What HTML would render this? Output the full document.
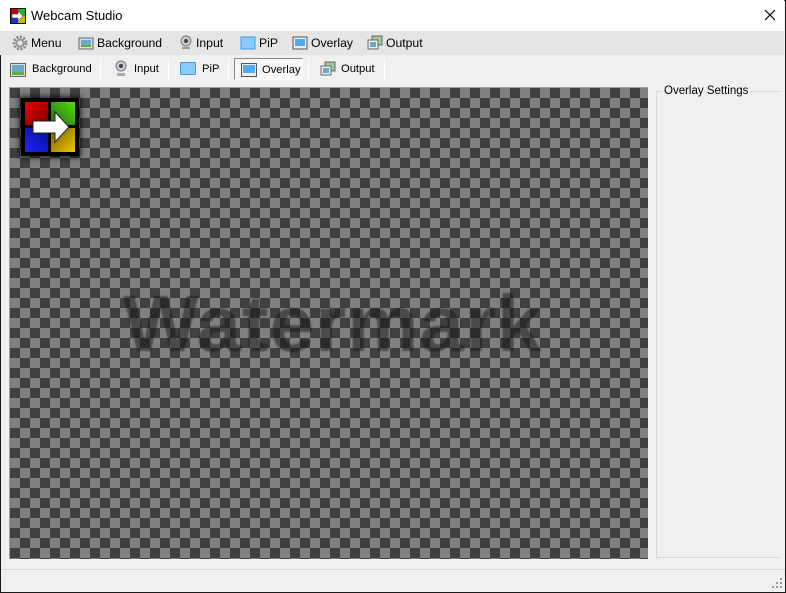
<!DOCTYPE html>
<html><head><style>
*{margin:0;padding:0;box-sizing:border-box}
body{width:786px;height:593px;overflow:hidden;background:#f0f0f0;font-family:"Liberation Sans",Arial,sans-serif;font-size:12px;color:#000;position:relative}
.win{position:absolute;left:0;top:0;width:786px;height:593px;border:1px solid #1a1a1a;border-top:1px solid #2a2a2a}
.title{position:absolute;left:0;top:0;width:784px;height:31px;background:#fff}
.title span{position:absolute;left:31px;top:8px;font-size:13px}
.menu{position:absolute;left:0;top:31px;width:784px;height:24px;background:#e5e5e5}
.mi{position:absolute;top:5px;font-size:12.2px}
.tb{position:absolute;top:63px;font-size:11.2px}
.sep{position:absolute;top:58px;width:1px;height:22px;background:#c8c8c8;border-right:1px solid #fff}
.ico{position:absolute}
.canvas{position:absolute;left:9px;top:87px;width:639px;height:472px;border-left:1px solid #a0a0a0;border-top:1px solid #a0a0a0;
background-color:#404040;background-image:linear-gradient(45deg,#808080 25%,transparent 25%,transparent 75%,#808080 75%),linear-gradient(45deg,#808080 25%,transparent 25%,transparent 75%,#808080 75%);background-size:20px 20px;background-position:0 0,10px 10px;overflow:hidden}
.wm{position:absolute;left:113px;top:190px;font-size:80px;font-weight:bold;color:rgba(20,20,20,0.5);letter-spacing:1px;filter:blur(0.8px)}
.gb{position:absolute;left:656px;top:91px;width:125px;height:467px;border:1px solid #d8d8d8;border-right:none}
.gb span{position:absolute;left:5px;top:-7px;background:#f0f0f0;padding:0 2px;font-size:11.5px}
</style></head><body>
<div class="win"></div>
<div class="title">
<svg class="ico" style="left:10px;top:8px" width="16" height="16" viewBox="0 0 16 16"><rect width="16" height="16" fill="#111"/><rect x="1" y="1" width="7" height="7" fill="#c00"/><rect x="8" y="1" width="7" height="7" fill="#3a3"/><rect x="1" y="8" width="7" height="7" fill="#13c"/><rect x="8" y="8" width="7" height="7" fill="#cb0"/><path d="M2 6h6V3l5 5-5 5v-3H2z" fill="#fff" stroke="#333" stroke-width=".5"/></svg>
<span>Webcam Studio</span>
<svg class="ico" style="left:764px;top:9px" width="12" height="12"><path d="M1 1L11 11M11 1L1 11" stroke="#000" stroke-width="1.2"/></svg>
</div>
<div class="menu">
<svg class="ico" style="left:12px;top:4px" width="16" height="16"><circle cx="8" cy="8" r="6" fill="none" stroke="#888" stroke-width="3" stroke-dasharray="2 1.5"/><circle cx="8" cy="8" r="3.5" fill="none" stroke="#999" stroke-width="2"/></svg>
<span class="mi" style="left:31px">Menu</span>
<svg class="ico" style="left:78px;top:4px" width="16" height="16"><rect x="1" y="3" width="14" height="11" fill="#ddd" stroke="#666"/><rect x="3" y="5" width="10" height="7" fill="#6ac"/><rect x="3" y="10" width="10" height="2" fill="#6a3"/></svg>
<span class="mi" style="left:97px">Background</span>
<svg class="ico" style="left:178px;top:4px" width="16" height="16"><circle cx="8" cy="6" r="5" fill="#ccc" stroke="#777"/><circle cx="8" cy="6" r="2" fill="#345"/><rect x="4" y="12" width="8" height="2" fill="#999"/></svg>
<span class="mi" style="left:196px">Input</span>
<svg class="ico" style="left:240px;top:4px" width="16" height="16"><rect x="1" y="2" width="14" height="12" fill="#8cf" stroke="#49d"/></svg>
<span class="mi" style="left:259px">PiP</span>
<svg class="ico" style="left:292px;top:5px" width="16" height="14"><rect x="1" y="1" width="14" height="12" fill="#eee" stroke="#555"/><rect x="3" y="3" width="10" height="7" fill="#5ae"/></svg>
<span class="mi" style="left:311px">Overlay</span>
<svg class="ico" style="left:367px;top:4px" width="16" height="16"><rect x="5" y="1" width="10" height="9" fill="#9c9" stroke="#666"/><rect x="1" y="5" width="10" height="9" fill="#eee" stroke="#666"/><rect x="3" y="7" width="6" height="5" fill="#6ac"/></svg>
<span class="mi" style="left:386px">Output</span>
</div>
<svg class="ico" style="left:10px;top:63px" width="16" height="14"><rect x="0.5" y="0.5" width="15" height="13" fill="#ddd" stroke="#666"/><rect x="2" y="2" width="12" height="10" fill="#6ac"/><rect x="2" y="9" width="12" height="3" fill="#6a3"/></svg>
<span class="tb" style="left:32px">Background</span>
<div class="sep" style="left:100px"></div>
<svg class="ico" style="left:113px;top:60px" width="16" height="18"><circle cx="8" cy="6" r="5" fill="#ccc" stroke="#777"/><circle cx="8" cy="6" r="2" fill="#345"/><rect x="4" y="13" width="8" height="3" fill="#aaa"/></svg>
<span class="tb" style="left:134px">Input</span>
<div class="sep" style="left:168px"></div>
<svg class="ico" style="left:180px;top:62px" width="16" height="14"><rect x="0.5" y="0.5" width="15" height="12" rx="1" fill="#8cf" stroke="#49d"/></svg>
<span class="tb" style="left:202px">PiP</span>
<div class="sep" style="left:228px"></div>
<div style="position:absolute;left:234px;top:58px;width:69px;height:22px;border:1px solid #8a8a8a;border-right-color:#fff;border-bottom-color:#fff;background:#f7f7f7"></div>
<svg class="ico" style="left:241px;top:63px" width="16" height="14"><rect x="0.5" y="0.5" width="15" height="13" fill="#eee" stroke="#555"/><rect x="2" y="2" width="12" height="8" fill="#5ae"/></svg>
<span class="tb" style="left:262px;top:64px">Overlay</span>
<div class="sep" style="left:308px"></div>
<svg class="ico" style="left:320px;top:61px" width="16" height="16"><rect x="5" y="1" width="10" height="9" fill="#9c9" stroke="#666"/><rect x="1" y="5" width="10" height="9" fill="#eee" stroke="#666"/><rect x="3" y="7" width="6" height="5" fill="#6ac"/></svg>
<span class="tb" style="left:341px">Output</span>
<div class="sep" style="left:384px"></div>
<div class="canvas">
<div style="position:absolute;left:11px;top:10px;width:58px;height:58px;background:#000;box-shadow:0 0 5px 2px rgba(0,0,0,.7)"></div>
<svg style="position:absolute;left:15px;top:14px" width="50" height="50" viewBox="0 0 50 50"><defs><linearGradient id="r" x1="0" y1="0" x2="1" y2="1"><stop offset="0" stop-color="#e00"/><stop offset="1" stop-color="#700"/></linearGradient><linearGradient id="g" x1="1" y1="0" x2="0" y2="1"><stop offset="0" stop-color="#5d0"/><stop offset="1" stop-color="#262"/></linearGradient><linearGradient id="b" x1="0" y1="1" x2="1" y2="0"><stop offset="0" stop-color="#22f"/><stop offset="1" stop-color="#018"/></linearGradient><linearGradient id="y" x1="1" y1="1" x2="0" y2="0"><stop offset="0" stop-color="#ec0"/><stop offset="1" stop-color="#750"/></linearGradient></defs><rect x="0" y="0" width="23" height="23" fill="url(#r)"/><rect x="26" y="0" width="24" height="23" fill="url(#g)"/><rect x="0" y="26" width="23" height="24" fill="url(#b)"/><rect x="26" y="26" width="24" height="24" fill="url(#y)"/><path d="M8 19h22v-9l14 15-14 15v-9H8z" fill="#fff" stroke="#222" stroke-width="1"/></svg>
<div class="wm">Watermark</div>
</div>
<div class="gb"><span>Overlay Settings</span></div>
<div style="position:absolute;left:1px;top:569px;width:784px;height:1px;background:#d6d6d6"></div>
<svg class="ico" style="left:772px;top:578px" width="11" height="11"><g fill="#999"><rect x="8" y="0" width="2" height="2"/><rect x="4" y="4" width="2" height="2"/><rect x="8" y="4" width="2" height="2"/><rect x="0" y="8" width="2" height="2"/><rect x="4" y="8" width="2" height="2"/><rect x="8" y="8" width="2" height="2"/></g></svg>
</body></html>
